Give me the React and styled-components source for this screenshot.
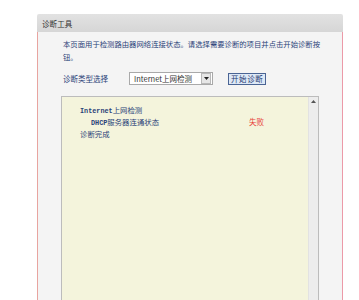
import React from "react";
import styled, { createGlobalStyle } from "styled-components";

const Global = createGlobalStyle`
  html, body { margin: 0; padding: 0; background: #ffffff; }
  body { font-family: "Noto Sans CJK SC", "Liberation Sans", sans-serif; overflow: hidden; }
`;

const Page = styled.div`
  padding: 14px 16px 0 37px;
  width: 306px;
`;

const Panel = styled.div`
  display: flex;
  flex-direction: column;
  width: 306px;
`;

const Header = styled.div`
  height: 18px;
  background: linear-gradient(#e2e2e2, #d6d6d6);
  border-radius: 2px 2px 0 0;
  display: flex;
  align-items: center;
  padding-left: 5px;
  font-size: 7.5px;
  color: #333;
  letter-spacing: 0.1px;
`;

const Body = styled.div`
  background: #f4f4f4;
  border-left: 1px solid #e8a4a0;
  border-right: 1px solid #ec9aa8;
  padding: 5px 24px 0 25px;
  height: 263px;
  display: flex;
  flex-direction: column;
`;

const Desc = styled.p`
  margin: 0;
  font-size: 7.35px;
  line-height: 13px;
  color: #2a4278;
  width: 262px;
`;

const Row = styled.div`
  display: flex;
  align-items: center;
  margin-top: 9px;
  height: 13px;
`;

const Label = styled.span`
  font-size: 7.5px;
  color: #2a4278;
  width: 66px;
`;

const Select = styled.div`
  height: 11px;
  border: 1px solid #a9a9a9;
  background: #fff;
  display: flex;
  align-items: center;
  justify-content: space-between;
  padding-left: 4px;
  font-size: 7.5px;
  color: #333;
  box-sizing: content-box;
  width: 78px;
`;

const Arrow = styled.span`
  width: 8px;
  height: 9px;
  margin-right: 1px;
  background: #e6e6e6;
  border: 1px solid #b8b8b8;
  display: flex;
  align-items: center;
  justify-content: center;
`;

const Button = styled.div`
  margin-left: 15px;
  height: 10px;
  padding: 0 2px;
  border: 1px solid #4a6494;
  background: #dde8f6;
  font-size: 7.5px;
  color: #1f3a72;
  display: flex;
  align-items: center;
  letter-spacing: 0.6px;
`;

const LogBox = styled.div`
  margin-top: 11px;
  margin-left: -2px;
  width: 256px;
  flex: 1;
  border: 1px solid #bcbcbc;
  border-bottom: none;
  display: flex;
`;

const LogContent = styled.div`
  flex: 1;
  background: #f4f4dc;
  padding: 7px 0 0 18px;
  font-family: "Liberation Mono", "Noto Sans CJK SC", monospace;
  font-size: 6.6px;
  line-height: 12px;
  color: #2a4278;
`;

const LogLine = styled.div`
  position: relative;
  height: 12px;
  padding-left: ${(p) => p.$indent || 0}px;
  white-space: pre;
`;

const Latin = styled.span`
  font-weight: bold;
  font-size: 6.8px;
`;

const Cjk = styled.span`
  font-family: "Noto Sans CJK SC", sans-serif;
  font-size: 7.4px;
`;

const Fail = styled.span`
  position: absolute;
  left: 169px;
  top: 0;
  font-family: "Noto Sans CJK SC", sans-serif;
  font-size: 7.5px;
  color: #e8453c;
`;

const Scrollbar = styled.div`
  width: 9px;
  background: #ededed;
  border-left: 1px solid #e2e2e2;
  display: flex;
  justify-content: center;
  padding-top: 3px;
`;

export default function App() {
  return (
    <>
      <Global />
      <Page>
        <Panel>
          <Header>诊断工具</Header>
          <Body>
            <Desc>本页面用于检测路由器网络连接状态。请选择需要诊断的项目并点击开始诊断按钮。</Desc>
            <Row>
              <Label>诊断类型选择</Label>
              <Select>
                <span>Internet上网检测</span>
                <Arrow>
                  <svg width="5" height="3" viewBox="0 0 5 3">
                    <path d="M0 0 L5 0 L2.5 3 Z" fill="#222" />
                  </svg>
                </Arrow>
              </Select>
              <Button>开始诊断</Button>
            </Row>
            <LogBox>
              <LogContent>
                <LogLine>
                  <Latin>Internet</Latin>
                  <Cjk>上网检测</Cjk>
                </LogLine>
                <LogLine $indent={11}>
                  <Latin>DHCP</Latin>
                  <Cjk>服务器连通状态</Cjk>
                  <Fail>失败</Fail>
                </LogLine>
                <LogLine>
                  <Cjk>诊断完成</Cjk>
                </LogLine>
              </LogContent>
              <Scrollbar>
                <svg width="5" height="3" viewBox="0 0 5 3">
                  <path d="M0 3 L5 3 L2.5 0 Z" fill="#555" />
                </svg>
              </Scrollbar>
            </LogBox>
          </Body>
        </Panel>
      </Page>
    </>
  );
}
